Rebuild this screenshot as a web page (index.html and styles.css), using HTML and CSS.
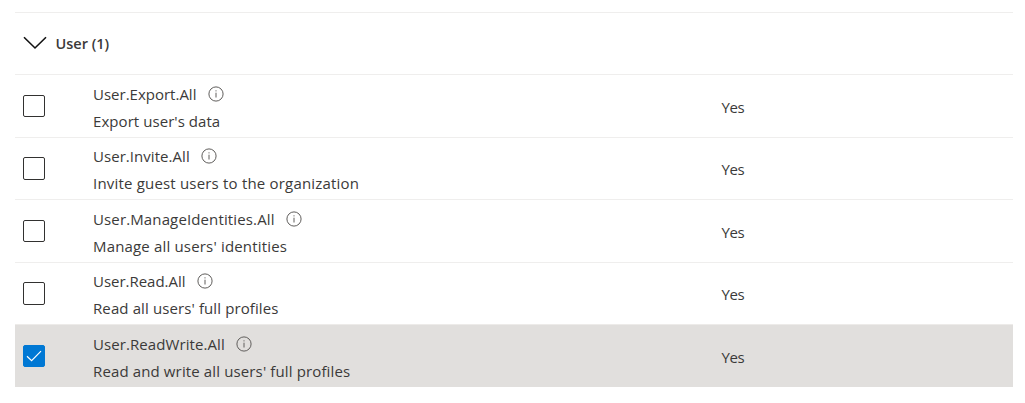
FILE: index.html
```html
<!DOCTYPE html>
<html lang="en">
<head>
<meta charset="utf-8">
<title>Permissions</title>
<link rel="stylesheet" href="styles.css">
</head>
<body>
<svg class="defs" width="0" height="0"><defs>
<symbol id="info" viewBox="0 0 16 16"><circle cx="8" cy="8" r="7.1" fill="none" stroke="currentColor"/><path d="M8 6.7V11.5M8 4.3V5.4" fill="none" stroke="currentColor"/></symbol>
</defs></svg>
<main class="list">
<div class="row header"><svg class="chevron" viewBox="0 0 24 14"><path d="M1 1.2L12 12L23 1.2"/></svg><span class="group">User (1)</span></div>
<div class="row"><span class="check"></span><div class="info"><div class="name"><span class="n1">User.Export.All</span><svg class="icon"><use href="#info"/></svg></div><div class="desc d1">Export user's data</div></div><span class="consent">Yes</span></div>
<div class="row"><span class="check"></span><div class="info"><div class="name"><span class="n2">User.Invite.All</span><svg class="icon"><use href="#info"/></svg></div><div class="desc d2">Invite guest users to the organization</div></div><span class="consent">Yes</span></div>
<div class="row"><span class="check"></span><div class="info"><div class="name"><span class="n3">User.ManageIdentities.All</span><svg class="icon"><use href="#info"/></svg></div><div class="desc d3">Manage all users' identities</div></div><span class="consent">Yes</span></div>
<div class="row"><span class="check"></span><div class="info"><div class="name"><span class="n4">User.Read.All</span><svg class="icon"><use href="#info"/></svg></div><div class="desc d4">Read all users' full profiles</div></div><span class="consent">Yes</span></div>
<div class="row selected"><span class="check checked"><svg class="tick" viewBox="0 0 16 12"><path d="M1 6.2L5.6 10.6L15 1.2"/></svg></span><div class="info"><div class="name"><span class="n5">User.ReadWrite.All</span><svg class="icon"><use href="#info"/></svg></div><div class="desc d5">Read and write all users' full profiles</div></div><span class="consent">Yes</span></div>
</main>
</body>
</html>
```
FILE: styles.css
```css
* { box-sizing: border-box; }
body { margin: 0; background: #fff; color: #3b3a39; font: 15px/20px "Open Sans", "Noto Sans", sans-serif; overflow: hidden; }
.defs { display: block; }
.list { width: 998px; margin: 11.9px 0 0 15px; }
.row { display: flex; height: 62.5px; border-top: 1px solid #efeeed; padding-left: 8px; }
.header { align-items: center; }
.chevron { width: 24px; height: 14px; margin-top: -2px; fill: none; stroke: #111; stroke-width: 1.6; }
.group { margin: 1px 0 0 8.5px; font-size: 14.5px; font-weight: 600; }
.check { width: 22px; height: 22.2px; margin-top: 19.5px; border: 1px solid #323130; border-radius: 2px; background: #fff; flex: none; display: flex; align-items: center; justify-content: center; }
.checked { background: #0078d4; border-color: #0078d4; }
.tick { width: 16px; height: 12px; fill: none; stroke: #fff; stroke-width: 1.2; }
.info { margin-left: 48px; width: 628.5px; padding-top: 8.55px; white-space: nowrap; }
.name { display: flex; align-items: center; height: 20px; }
.icon { width: 16px; height: 16px; margin-left: 11.5px; color: #605e5c; }
.desc { margin-top: 7px; }
.consent { padding-top: 21.55px; letter-spacing: -0.4px; }
.n2 { letter-spacing: 0.05px; }
.n3 { letter-spacing: 0.13px; }
.n5 { letter-spacing: 0.08px; }
.d1 { letter-spacing: 0.06px; }
.d2 { letter-spacing: 0.19px; }
.d3 { letter-spacing: 0.17px; }
.d4 { letter-spacing: 0.11px; }
.d5 { letter-spacing: 0.13px; }
.n4 { letter-spacing: -0.02px; }
.selected { background: #e1dfdd; border-top-color: #edebe9; }
```
